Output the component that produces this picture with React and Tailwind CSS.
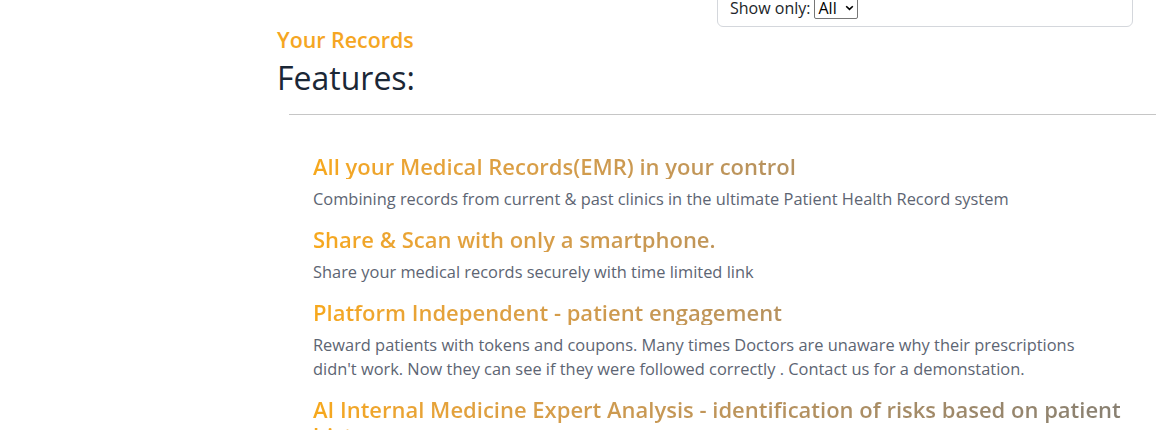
import React, { useState } from "react";

const features = [
  {
    title: "All your Medical Records(EMR) in your control",
    body: "Combining records from current & past clinics in the ultimate Patient Health Record system",
  },
  {
    title: "Share & Scan with only a smartphone.",
    body: "Share your medical records securely with time limited link",
  },
  {
    title: "Platform Independent - patient engagement",
    body: "Reward patients with tokens and coupons. Many times Doctors are unaware why their prescriptions didn't work. Now they can see if they were followed correctly . Contact us for a demonstation.",
  },
  {
    title: "AI Internal Medicine Expert Analysis - identification of risks based on patient history",
    body: "Flag possible drug interactions and risk factors before the next visit.",
  },
];

const App = () => {
  const [show, setShow] = useState("All");

  return (
    <div className="w-[1156px] h-[430px] overflow-hidden bg-white font-['Open_Sans',sans-serif]">
      <div className="flex justify-end pr-[23px]">
        <div className="w-[416px] -mt-[20px] h-[47px] border border-[#d4d7dc] rounded-md px-[12px] flex items-end pb-[7px]">
          <label className="text-[16px] text-[#212529] leading-[20px] flex items-center gap-[4px]">
            Show only:
            <span className="relative inline-flex">
              <select
                value={show}
                onChange={(e) => setShow(e.target.value)}
                className="appearance-none w-[44px] h-[22px] text-[16px] leading-[20px] text-black border border-[#767676] rounded-[2px] pl-[3px] pr-[14px] bg-white"
              >
                <option>All</option>
                <option>Records</option>
                <option>Features</option>
              </select>
              <svg
                className="pointer-events-none absolute right-[4px] top-[8px]"
                width="9"
                height="6"
                viewBox="0 0 9 6"
              >
                <path d="M1.2 1.2l3.3 3.2 3.3-3.2" fill="none" stroke="#000" strokeWidth="1.6" />
              </svg>
            </span>
          </label>
        </div>
      </div>

      <div className="pl-[277px]">
        <h2 className="text-[21.4px] leading-[26px] font-semibold text-[#f5a623]">
          Your Records
        </h2>
        <h1 className="text-[32px] leading-[40px] text-[#1b2736] mt-[5px]">
          Features:
        </h1>
      </div>

      <hr className="ml-[289px] mt-[16px] border-t border-[#c6c6c6]" />

      <div className="ml-[313px] w-[808px] pt-[38px]">
        {features.map((f, i) => (
          <div key={i} className="mb-[15px]">
            <h3 className="text-[22px] leading-[26px] font-semibold bg-gradient-to-r from-[#f7a81b] to-[#888072] bg-clip-text text-transparent mb-[8px]">
              {f.title}
            </h3>
            <p className="text-[16.4px] leading-[24px] text-[#5d6573]">{f.body}</p>
          </div>
        ))}
      </div>
    </div>
  );
};

export default App;
